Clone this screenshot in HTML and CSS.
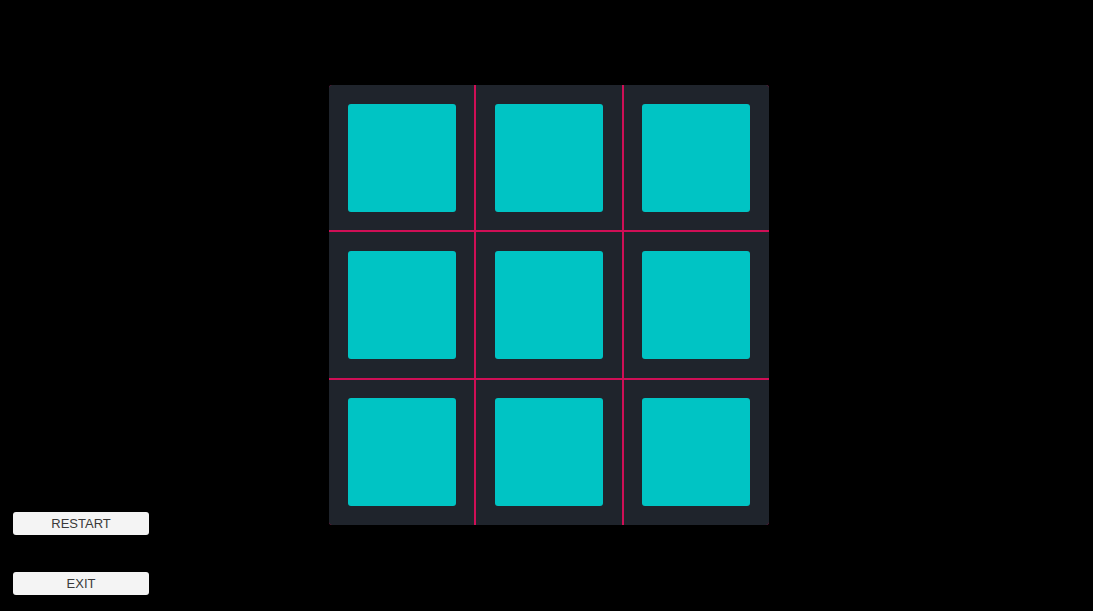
FILE: index.html
```html
<!DOCTYPE html>
<html>
<head>
<meta charset="utf-8">
<link rel="stylesheet" href="styles.css">
</head>
<body>
<div class="stage">
  <div class="controls">
    <button class="btn">RESTART</button>
    <button class="btn">EXIT</button>
  </div>
  <div class="board">
    <div class="cell"><div class="tile"></div></div>
    <div class="cell"><div class="tile"></div></div>
    <div class="cell"><div class="tile"></div></div>
    <div class="cell"><div class="tile"></div></div>
    <div class="cell"><div class="tile"></div></div>
    <div class="cell"><div class="tile"></div></div>
    <div class="cell"><div class="tile"></div></div>
    <div class="cell"><div class="tile"></div></div>
    <div class="cell"><div class="tile"></div></div>
  </div>
</div>
</body>
</html>
```
FILE: styles.css
```css
html, body {
  margin: 0;
  padding: 0;
  background: #000;
  height: 100%;
  overflow: hidden;
}
.stage {
  display: grid;
  grid-template-columns: 136px 440px;
  column-gap: 180px;
  padding: 85px 0 16px 13px;
  height: 611px;
  box-sizing: border-box;
}
.controls {
  display: flex;
  flex-direction: column;
  justify-content: flex-end;
  gap: 37px;
}
.btn {
  height: 23px;
  width: 136px;
  margin: 0;
  padding: 0;
  border: none;
  border-radius: 3px;
  background: #f4f4f4;
  color: #3a3a3a;
  font-family: "Liberation Sans", Arial, sans-serif;
  font-size: 13px;
  line-height: 23px;
}
.board {
  width: 440px;
  height: 440px;
  display: grid;
  grid-template-columns: repeat(3, 1fr);
  grid-template-rows: repeat(3, 1fr);
  gap: 2px;
  background: #cf0f56;
  border-radius: 3px;
  overflow: hidden;
}
.cell {
  background: #1f242c;
  display: flex;
  align-items: center;
  justify-content: center;
}
.tile {
  width: 108px;
  height: 108px;
  background: #00c4c4;
  border-radius: 3px;
}
```
